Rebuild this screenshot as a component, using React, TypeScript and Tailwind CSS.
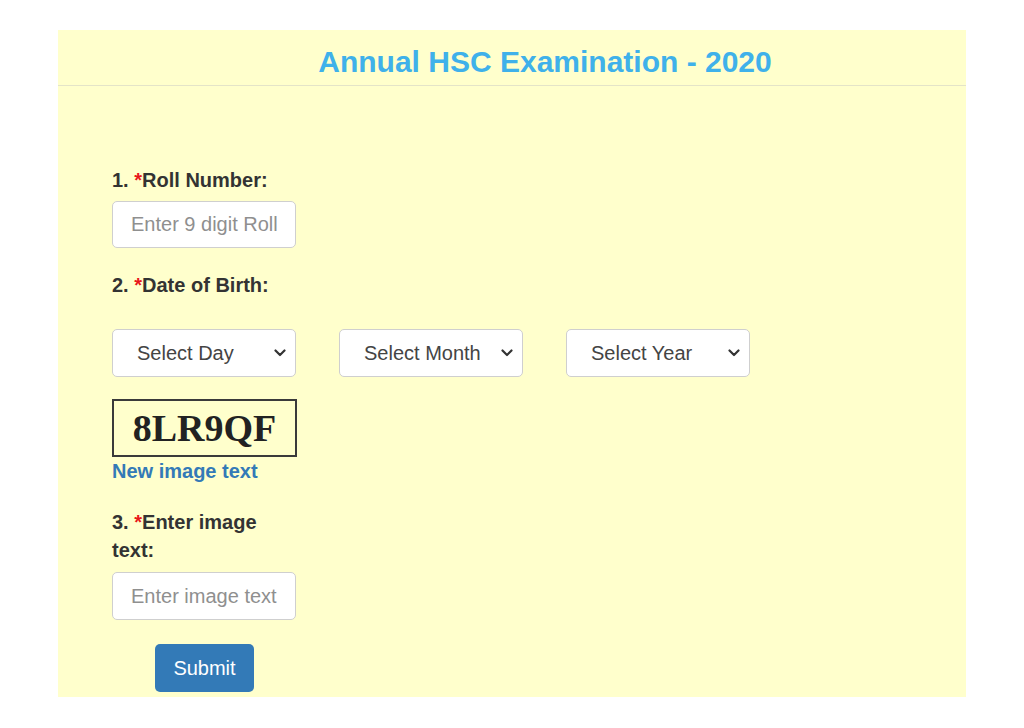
import React from "react";

const Chevron = () => (
  <svg
    className="pointer-events-none absolute right-[10px] top-1/2 -translate-y-1/2"
    width="12"
    height="8"
    viewBox="0 0 12 8"
    fill="none"
  >
    <path d="M1.5 1.5 L6 6 L10.5 1.5" stroke="#333" strokeWidth="2.2" strokeLinecap="round" strokeLinejoin="round" />
  </svg>
);

const Select = ({ label }: { label: string }) => (
  <div className="relative w-[184px] h-[48px]">
    <select className="appearance-none w-full h-full rounded-[5px] border border-[#cfcfcf] bg-white pl-[24px] pr-[30px] text-[20px] text-[#444] outline-none">
      <option>{label}</option>
    </select>
    <Chevron />
  </div>
);

const Label = ({ num, text }: { num: string; text: string }) => (
  <div className="w-[184px] text-[20px] leading-[28px] font-bold text-[#333]">
    {num} <span className="text-[#e8161a]">*</span>
    {text}
  </div>
);

export default function App() {
  return (
    <div
      className="w-[1024px] h-[728px] bg-white pt-[30px]"
      style={{ fontFamily: '"Liberation Sans", Arial, Helvetica, sans-serif' }}
    >
      <div className="ml-[58px] w-[908px] h-[667px] bg-[#ffffcc] flex flex-col">
        <div className="h-[56px] border-b border-[#e4e4c8] flex items-center justify-center pl-[66px] pt-[8px]">
          <h1 className="text-[30px] font-bold text-[#3fb1ea]">Annual HSC Examination - 2020</h1>
        </div>
        <div className="flex flex-col pl-[54px]">
          <div className="mt-[80px]">
            <Label num="1." text="Roll Number:" />
          </div>
          <input
            className="mt-[7px] w-[184px] h-[47px] rounded-[5px] border border-[#cfcfcf] bg-white px-[18px] text-[20px] text-[#444] placeholder:text-[#8f8f8f] outline-none"
            placeholder="Enter 9 digit Roll"
          />
          <div className="mt-[23px]">
            <Label num="2." text="Date of Birth:" />
          </div>
          <div className="mt-[30px] flex gap-[43px]">
            <Select label="Select Day" />
            <Select label="Select Month" />
            <Select label="Select Year" />
          </div>
          <div
            className="mt-[22px] w-[185px] h-[58px] border-2 border-[#3a3a3a] flex items-center justify-center text-[38px] font-bold text-[#222]"
            style={{ fontFamily: '"Liberation Serif", "Times New Roman", serif' }}
          >
            8LR9QF
          </div>
          <div className="mt-[2px] text-[20px] leading-[24px] font-bold text-[#337ab7]">New image text</div>
          <div className="mt-[25px]">
            <Label num="3." text="Enter image text:" />
          </div>
          <input
            className="mt-[8px] w-[184px] h-[48px] rounded-[5px] border border-[#cfcfcf] bg-white px-[18px] text-[20px] text-[#444] placeholder:text-[#8f8f8f] outline-none"
            placeholder="Enter image text"
          />
          <button className="mt-[24px] ml-[43px] w-[99px] h-[48px] rounded-[5px] bg-[#337ab7] text-white text-[20px]">
            Submit
          </button>
        </div>
      </div>
    </div>
  );
}
